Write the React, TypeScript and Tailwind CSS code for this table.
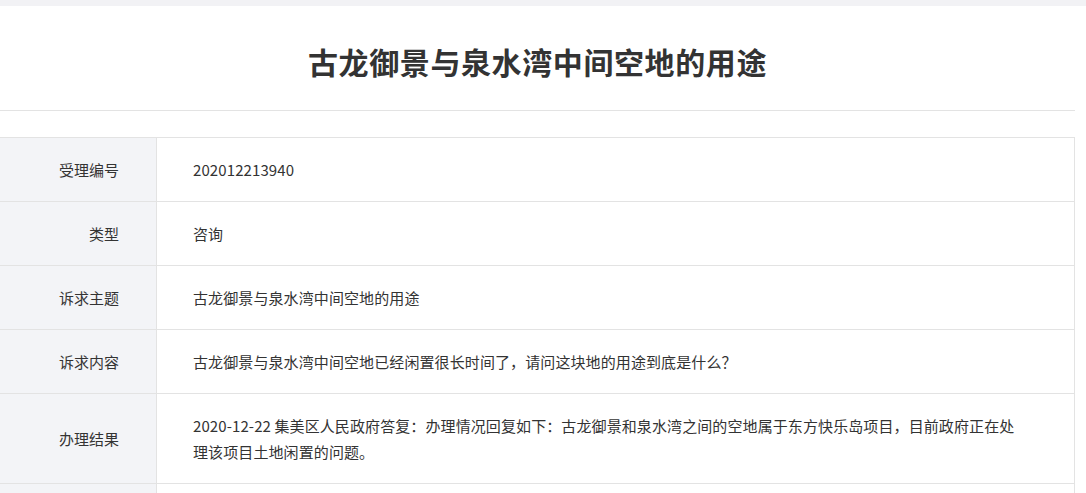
import React from "react";

const rows: { label: string; value: React.ReactNode }[] = [
  { label: "受理编号", value: "202012213940" },
  { label: "类型", value: "咨询" },
  { label: "诉求主题", value: "古龙御景与泉水湾中间空地的用途" },
  { label: "诉求内容", value: "古龙御景与泉水湾中间空地已经闲置很长时间了，请问这块地的用途到底是什么？" },
  {
    label: "办理结果",
    value: (
      <>
        2020-12-22 集美区人民政府答复：办理情况回复如下：古龙御景和泉水湾之间的空地属于东方快乐岛项目，目前政府正在处
        <br />
        理该项目土地闲置的问题。
      </>
    ),
  },
  { label: "", value: "" },
];

export default function App() {
  return (
    <div
      className="min-h-screen bg-white text-[#333]"
      style={{ fontFamily: '"Noto Sans CJK SC", "Noto Sans", sans-serif' }}
    >
      <div className="h-[6px] bg-[#f2f2f5]" />
      <div className="w-[1075px]">
        <div className="flex h-[105px] items-center justify-center border-b border-[#e3e3e3] pt-[6px]">
          <h1 className="text-[30px] font-bold leading-none tracking-[0.6px] text-[#333]">
            古龙御景与泉水湾中间空地的用途
          </h1>
        </div>
        <div className="mt-[26px] border-t border-r border-[#e3e3e3]">
          {rows.map((r, i) => (
            <div key={i} className="flex border-b border-[#e3e3e3]">
              <div className="flex w-[157px] shrink-0 items-center justify-end border-r border-[#e3e3e3] bg-[#f3f4f7] pr-[37px] text-[15px] leading-[26px]">
                {r.label}
              </div>
              <div className="flex-1 py-[18.5px] pl-[36px] pr-[30px] text-[15px] leading-[26px] tracking-[0.1px]">
                {r.value || "\u00a0"}
              </div>
            </div>
          ))}
        </div>
      </div>
    </div>
  );
}
